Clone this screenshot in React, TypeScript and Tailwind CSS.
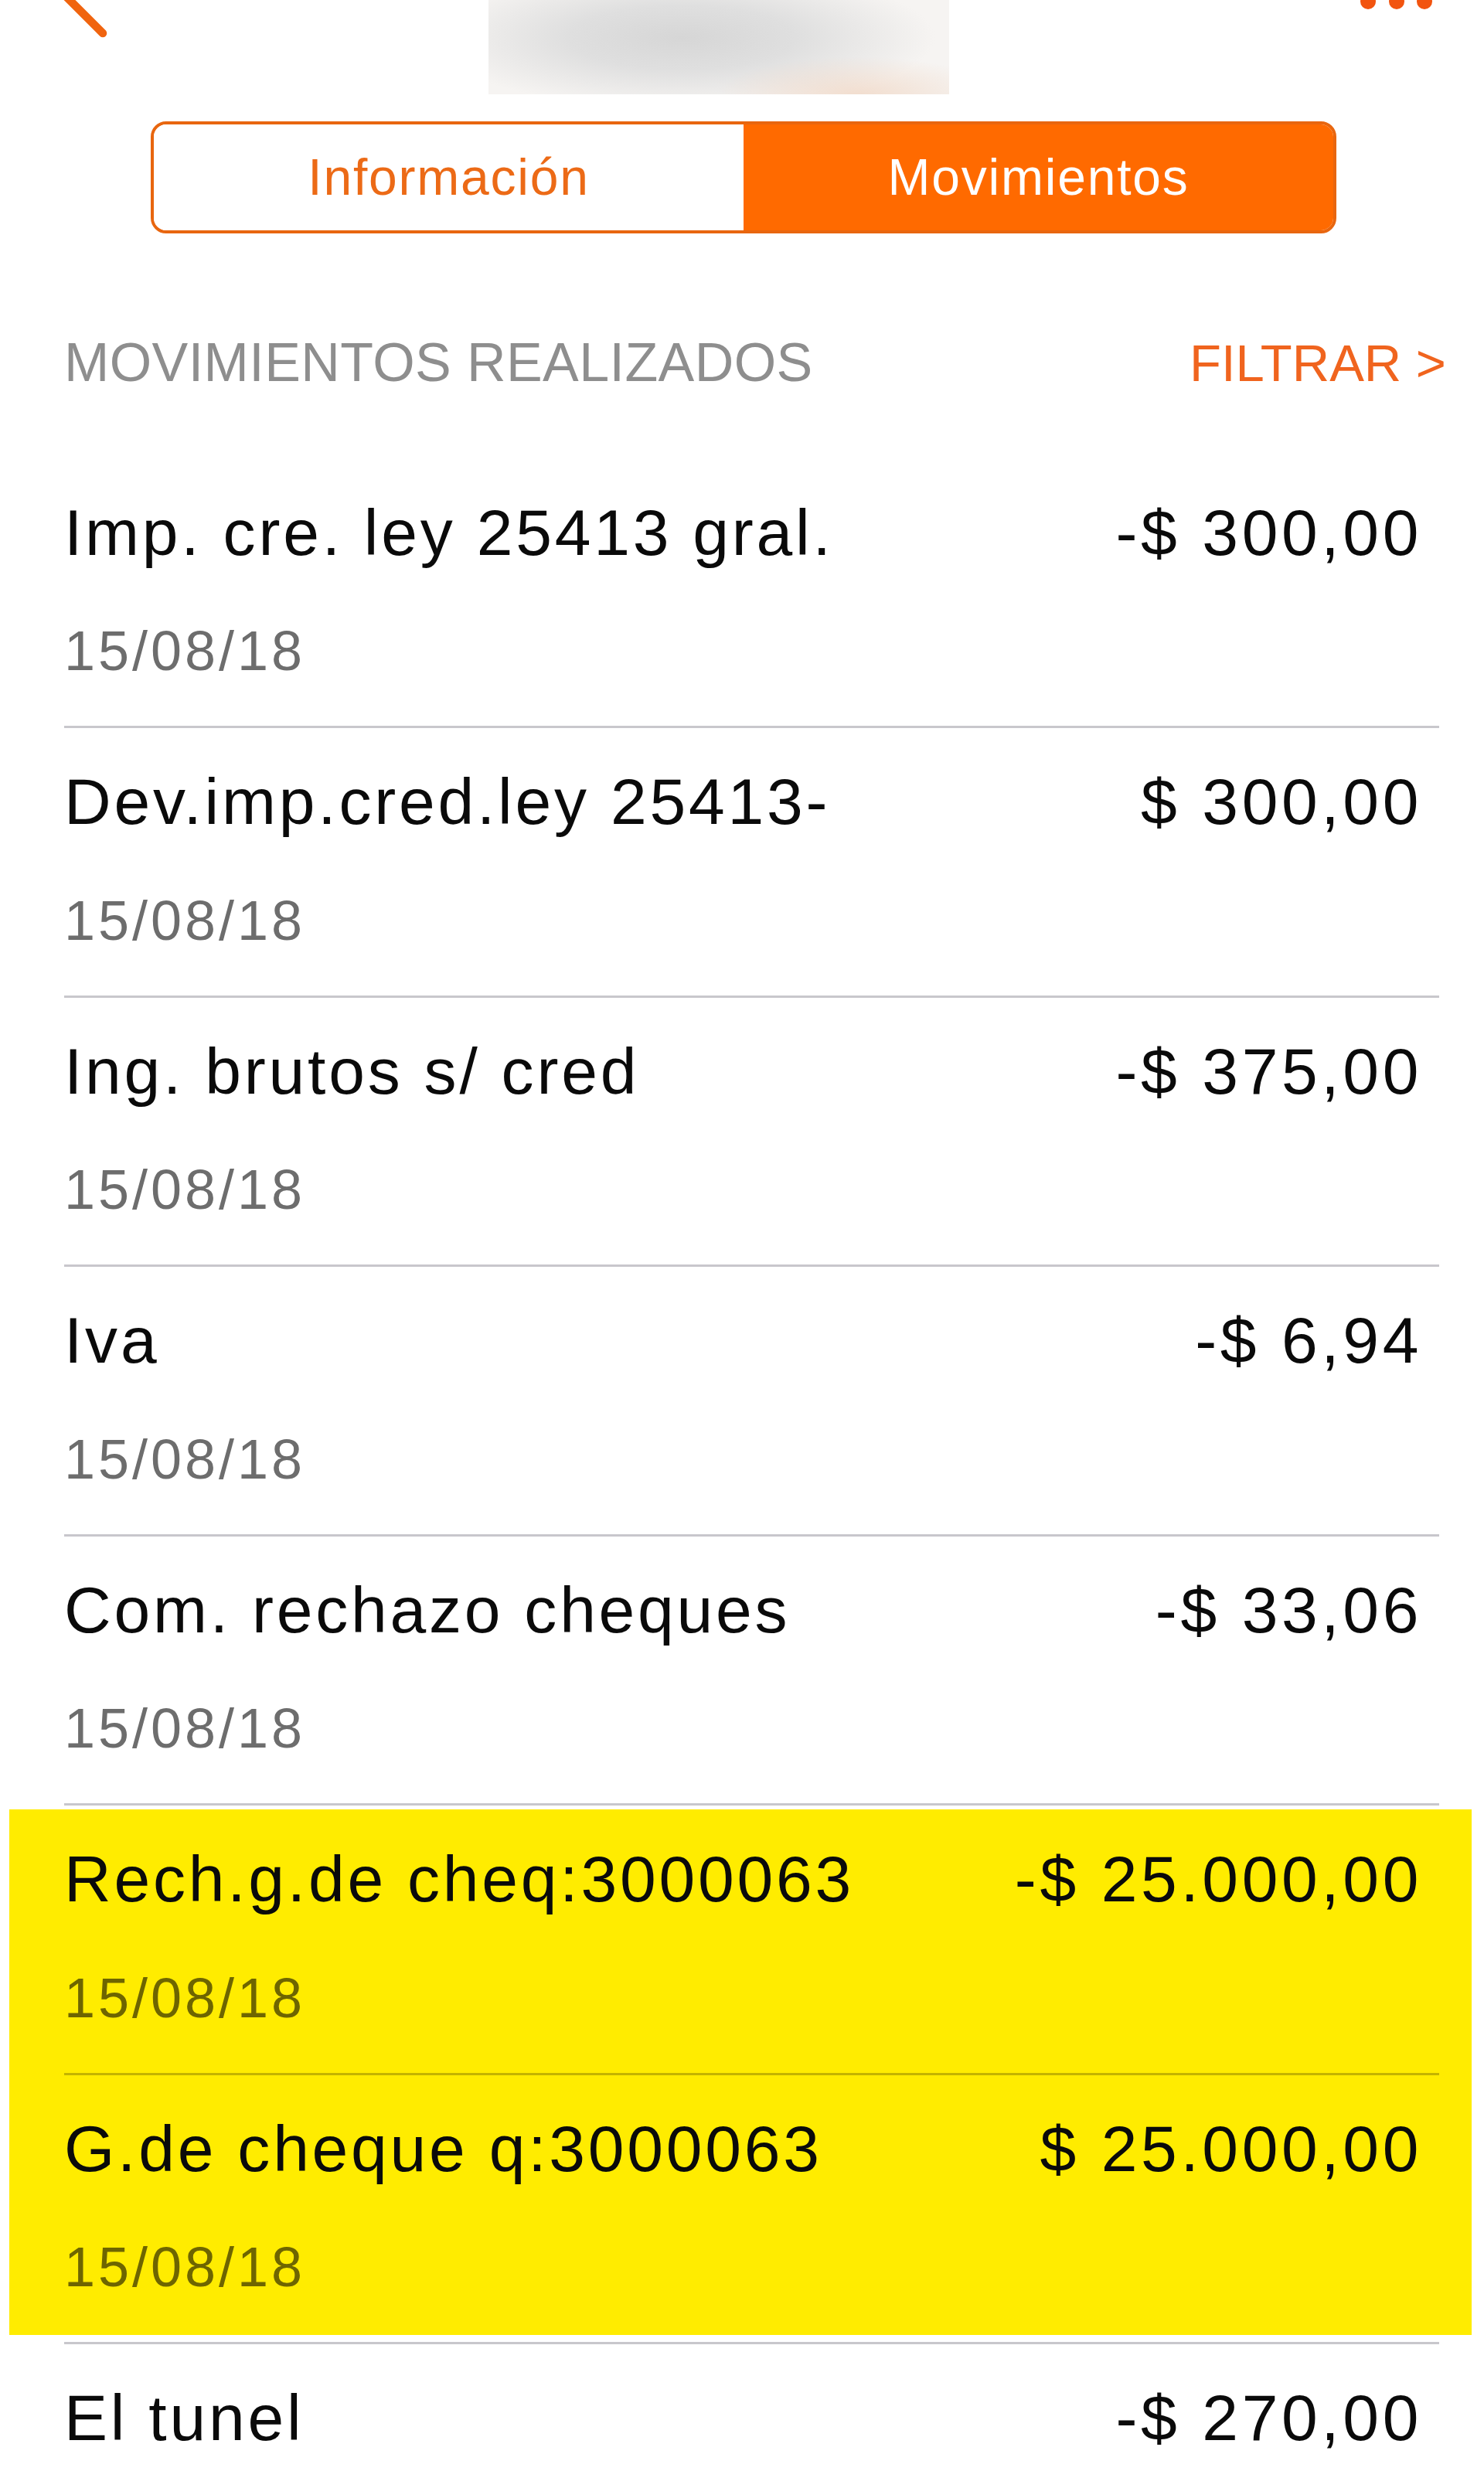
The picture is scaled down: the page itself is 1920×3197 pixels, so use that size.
import React from "react";

type Variant = "normal" | "hlTop" | "hlBottom" | "last";

const rows: { t: string; a: string }[] = [
  { t: "Imp. cre. ley 25413 gral.", a: "-$ 300,00" },
  { t: "Dev.imp.cred.ley 25413-", a: "$ 300,00" },
  { t: "Ing. brutos s/ cred", a: "-$ 375,00" },
  { t: "Iva", a: "-$ 6,94" },
  { t: "Com. rechazo cheques", a: "-$ 33,06" },
];

function Row({ t, a, variant = "normal" }: { t: string; a: string; variant?: Variant }) {
  const pad =
    variant === "hlTop"
      ? "pt-[48px] pb-[61px]"
      : variant === "hlBottom"
      ? "pt-[53px] pb-[52px]"
      : variant === "last"
      ? "pt-[53px]"
      : "pt-[53px] pb-[61px]";
  const dateColor = variant === "normal" ? "text-[#6d6d6d]" : "text-[#6e6500]";
  return (
    <div className={`flex flex-col ${pad}`}>
      <div className="flex justify-between pr-[22px] text-[84px] leading-[84px] text-[#0a0a0a] whitespace-nowrap">
        <span className="tracking-[0.045em]">{t}</span>
        <span className="tracking-[0.055em]">{a}</span>
      </div>
      {variant !== "last" && (
        <div className={`mt-[75.5px] text-[72px] leading-[72px] tracking-[0.055em] ${dateColor}`}>15/08/18</div>
      )}
    </div>
  );
}

function Sep({ hl = false }: { hl?: boolean }) {
  return <div className={hl ? "h-[3px] bg-[#c4b400]" : "h-[3px] bg-[#c8c7cc]"} />;
}

export default function App() {
  return (
    <div className="w-[1920px] h-[3197px] overflow-hidden bg-white font-['Liberation_Sans',Arial,sans-serif]">
      {/* top bar */}
      <div className="flex h-[157px] items-start">
        <div className="w-[632px]">
          <svg width="160" height="60" viewBox="0 0 160 60">
            <line x1="40" y1="-50" x2="133" y2="43" stroke="#f0640f" strokeWidth="10.5" strokeLinecap="round" />
          </svg>
        </div>
        <div className="w-[596px] h-[122px] bg-[radial-gradient(ellipse_30%_40%_at_80%_100%,rgba(240,212,192,0.7)_0%,rgba(245,225,210,0)_100%),radial-gradient(ellipse_55%_75%_at_42%_40%,#d6d6d6_0%,#dfdfdf_45%,#f6f4f2_100%)]" />
        <div className="pl-[530px]">
          <svg width="110" height="20" viewBox="0 0 110 20">
            <circle cx="12" cy="2" r="10" fill="#f2540f" />
            <circle cx="49" cy="2" r="10" fill="#f2540f" />
            <circle cx="85" cy="2" r="10" fill="#f2540f" />
          </svg>
        </div>
      </div>

      {/* segmented control */}
      <div className="ml-[195px] w-[1534px] h-[145px] flex rounded-[20px] border-[4px] border-[#e8660f] overflow-hidden">
        <div className="flex-1 flex items-center justify-center bg-white text-[66px] tracking-[0.027em] text-[#ec6a16]">
          Información
        </div>
        <div className="flex-1 flex items-center justify-center bg-[#ff6a00] text-[66px] tracking-[0.027em] text-white">
          Movimientos
        </div>
      </div>

      {/* section header */}
      <div className="ml-[83px] w-[1788px] mt-[132px] flex justify-between items-baseline">
        <span className="text-[70px] leading-[70px] tracking-[0.006em] text-[#8e8e8e]">MOVIMIENTOS REALIZADOS</span>
        <span className="text-[67px] leading-[70px] text-[#f0641e]">FILTRAR &gt;</span>
      </div>

      {/* list */}
      <div className="ml-[83px] w-[1779px] mt-[88.5px]">
        {rows.map((r) => (
          <React.Fragment key={r.t}>
            <Row t={r.t} a={r.a} />
            <Sep />
          </React.Fragment>
        ))}
        <div className="mt-[5px] mb-[9px] -ml-[71px] -mr-[42px] pl-[71px] pr-[42px] bg-[#ffec00]">
          <Row t="Rech.g.de cheq:3000063" a="-$ 25.000,00" variant="hlTop" />
          <Sep hl />
          <Row t="G.de cheque q:3000063" a="$ 25.000,00" variant="hlBottom" />
        </div>
        <Sep />
        <Row t="El tunel" a="-$ 270,00" variant="last" />
      </div>
    </div>
  );
}
